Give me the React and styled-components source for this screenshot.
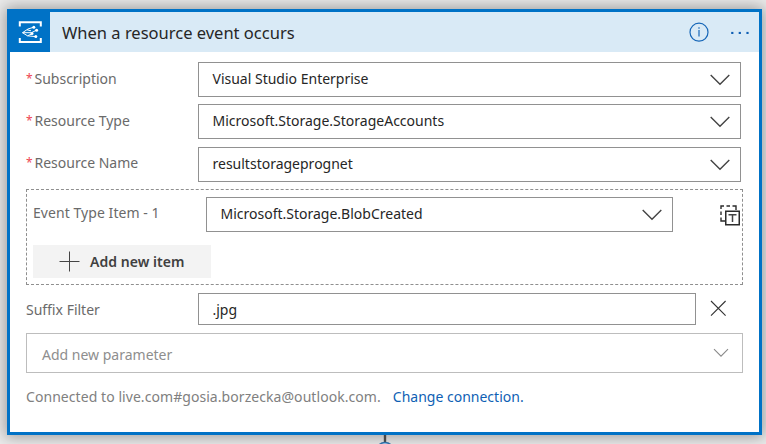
import React from "react";
import styled, { createGlobalStyle } from "styled-components";

const GlobalStyle = createGlobalStyle`
  *, *::before, *::after { box-sizing: border-box; }
  body {
    margin: 0;
    background: #ebebeb;
    font-family: "Noto Sans", "Open Sans", sans-serif;
    font-size: 14px;
    color: #262626;
  }
`;

const Canvas = styled.main`
  height: 444px;
  padding: 9px 4px 0 7px;
  overflow: hidden;
`;

const Card = styled.section`
  display: flex;
  flex-direction: column;
  height: 426px;
  border: 3px solid #0072c6;
  background: #fff;
  box-shadow: 0 0 14px 2px rgba(0, 0, 0, 0.34);
`;

const Header = styled.header`
  display: flex;
  align-items: center;
  height: 40px;
  flex: none;
  padding-right: 9px;
  background: #d9eaf6;
`;

const Brand = styled.span`
  width: 40px;
  height: 40px;
  background: #0072c6;
  svg { display: block; }
`;

const Title = styled.h1`
  flex: 1;
  margin: 0;
  padding: 1px 0 0 12px;
  font-size: 16.5px;
  line-height: 39px;
  font-weight: 400;
  white-space: nowrap;
`;

const HeaderIcons = styled.div`
  display: flex;
  align-items: center;
  gap: 21px;
  svg { display: block; }
`;

const Body = styled.div`
  display: flex;
  flex-direction: column;
  padding: 10px 16px 0;
`;

const Field = styled.div`
  display: flex;
  align-items: center;
  height: ${(p) => p.$height || 35}px;
  margin-bottom: ${(p) => p.$gap}px;
`;

const Label = styled.label`
  display: flex;
  width: ${(p) => p.$width || 172}px;
  flex: none;
  color: #6a6a6a;
  line-height: 20px;
  white-space: pre;
  letter-spacing: ${(p) => p.$spacing || 0}px;
  transform: translateY(${(p) => -(p.$lift || 0)}px);
`;

const Required = styled.span`
  width: 8.5px;
  color: #ee4452;
  font-size: 12px;
  line-height: 19px;
`;

const Input = styled.div`
  display: flex;
  align-items: center;
  justify-content: space-between;
  width: ${(p) => p.$width}px;
  height: ${(p) => p.$height || 35}px;
  padding: 0 ${(p) => (p.$muted ? 13 : 10)}px 0 ${(p) => (p.$muted ? 15 : 13.5)}px;
  border: 1px solid ${(p) => (p.$muted ? "#bdbdbd" : "#919191")};
  color: ${(p) => (p.$muted ? "#8e8e8e" : "#262626")};
  background: #fff;
  line-height: 20px;
  svg { display: block; flex: none; }
`;

const Value = styled.span`
  margin-top: ${(p) => p.$shift || 0}px;
`;

const ArrayGroup = styled.div`
  width: 717px;
  height: 96px;
  margin-bottom: 8px;
  padding: 7px 2px 0 6px;
  border: 1px dashed #8f8f8f;
`;

const TokenButton = styled.span`
  margin: 2px 0 0 auto;
  svg { display: block; }
`;

const AddButton = styled.button`
  display: flex;
  align-items: center;
  gap: 10px;
  width: 178px;
  height: 33px;
  padding: 0 0 0 26px;
  border: 0;
  background: #f3f3f3;
  color: #404040;
  font: 600 14px/20px "Noto Sans", "Open Sans", sans-serif;
  letter-spacing: 0.04px;
`;

const ClearButton = styled.span`
  margin: -2px 0 0 14px;
  svg { display: block; }
`;

const Connection = styled.p`
  display: flex;
  gap: 12px;
  margin: 14px 0 0;
  color: #808080;
  line-height: 20px;
  white-space: nowrap;
`;

const Account = styled.span`
  letter-spacing: 0.06px;
`;

const Link = styled.a`
  color: #0f5fb4;
`;

const Connector = styled.div`
  display: flex;
  justify-content: center;
  svg { display: block; position: relative; }
`;

function EventGridIcon() {
  return (
    <svg width="40" height="40" viewBox="0 0 40 40" fill="none" stroke="#fff">
      <path d="M9.8 14.5V10.2H30.8V14.5M9.8 26V30H30.8V26" strokeWidth="2" />
      <path d="M12.5 20.7L18 17L23.8 15.2M12.5 20.7H21.5L26.3 18.2M12.5 20.7L17.5 23.8L22 21.8M17.5 23.8L25.3 24.6M17 17.8L21 18.8" strokeWidth="1" />
      <g fill="#fff" stroke="none">
        <circle cx="23.8" cy="15.2" r="1.5" />
        <circle cx="26.6" cy="18.2" r="1.5" />
        <circle cx="22" cy="21.5" r="1.5" />
        <circle cx="25.8" cy="24.6" r="1.5" />
      </g>
    </svg>
  );
}

function InfoIcon() {
  return (
    <svg width="20" height="20" viewBox="0 0 20 20">
      <circle cx="10" cy="10.2" r="9" fill="none" stroke="#1767b8" strokeWidth="1.2" />
      <path d="M10 8V14.5M10 5.3V6.7" stroke="#1767b8" strokeWidth="1.2" />
    </svg>
  );
}

function MoreIcon() {
  return (
    <svg width="20" height="20" viewBox="0 0 20 20" fill="#0f5fb4">
      <rect x="1.2" y="9.9" width="2.2" height="2.1" />
      <rect x="8.7" y="9.9" width="2.2" height="2.1" />
      <rect x="16.4" y="9.9" width="2.2" height="2.1" />
    </svg>
  );
}

function Chevron({ small }) {
  return small ? (
    <svg width="16" height="10" viewBox="0 0 16 10" fill="none" stroke="#8a8a8a" strokeWidth="1.1">
      <path d="M1 1.2L8 8.2L15 1.2" />
    </svg>
  ) : (
    <svg width="20" height="12" viewBox="0 0 20 12" fill="none" stroke="#444" strokeWidth="1.4">
      <path d="M0.7 1L10 10.3L19.3 1" />
    </svg>
  );
}

function TokenIcon() {
  return (
    <svg width="20" height="21" viewBox="0 0 20 21" fill="none" stroke="#2b2b2b">
      <path d="M1 4V1H4M6.5 1H10M12.5 1H16V5M1 6.5V10M1 12.5V16H5" strokeWidth="1.4" />
      <rect x="5.75" y="6.25" width="13.5" height="13.5" fill="#fff" strokeWidth="1.5" />
      <path d="M8.5 9.8H16.5M12.5 9.8V17" strokeWidth="1.5" stroke="#444" />
    </svg>
  );
}

const fields = [
  { label: "Subscription", value: "Visual Studio Enterprise", gap: 7, lift: 1, shift: -2 },
  { label: "Resource Type", value: "Microsoft.Storage.StorageAccounts", gap: 8, lift: 1, shift: -2 },
  { label: "Resource Name", value: "resultstorageprognet", gap: 7, lift: 2, shift: -1 },
];

export default function App() {
  return (
    <>
      <GlobalStyle />
      <Canvas>
        <Card>
          <Header>
            <Brand><EventGridIcon /></Brand>
            <Title>When a resource event occurs</Title>
            <HeaderIcons>
              <InfoIcon />
              <MoreIcon />
            </HeaderIcons>
          </Header>
          <Body>
            {fields.map((f) => (
              <Field key={f.label} $gap={f.gap}>
                <Label $lift={f.lift}><Required>*</Required>{f.label}</Label>
                <Input $width={543}>
                  <Value $shift={f.shift}>{f.value}</Value>
                  <Chevron />
                </Input>
              </Field>
            ))}
            <ArrayGroup>
              <Field $gap={13}>
                <Label $width={173} $lift={2} $spacing={0.06}>Event Type Item - 1</Label>
                <Input $width={467}>
                  <Value $shift={-2}>Microsoft.Storage.BlobCreated</Value>
                  <Chevron />
                </Input>
                <TokenButton><TokenIcon /></TokenButton>
              </Field>
              <AddButton>
                <svg width="21" height="21" viewBox="0 0 21 21" stroke="#444" strokeWidth="1">
                  <path d="M0.5 10.5H20.5M10.5 0.5V20.5" />
                </svg>
                Add new item
              </AddButton>
            </ArrayGroup>
            <Field $height={32} $gap={8}>
              <Label $lift={-1}>Suffix Filter</Label>
              <Input $width={498} $height={32}><Value $shift={2}>.jpg</Value></Input>
              <ClearButton>
                <svg width="17" height="17" viewBox="0 0 17 17" stroke="#333" strokeWidth="1.1">
                  <path d="M1 1L15.6 15.6M15.6 1L1 15.6" />
                </svg>
              </ClearButton>
            </Field>
            <Input $muted $width={717} $height={40}>
              <Value $shift={3}>Add new parameter</Value>
              <Chevron small />
            </Input>
            <Connection>
              <Account>Connected to live.com#gosia.borzecka@outlook.com.</Account>
              <Link>Change connection.</Link>
            </Connection>
          </Body>
        </Card>
        <Connector>
          <svg width="20" height="20" viewBox="0 0 20 20">
            <path d="M10 0V8" stroke="#484848" strokeWidth="2.4" />
            <circle cx="10" cy="16" r="8.5" fill="#b9d9f2" stroke="#2f6ea5" strokeWidth="1.6" />
          </svg>
        </Connector>
      </Canvas>
    </>
  );
}
